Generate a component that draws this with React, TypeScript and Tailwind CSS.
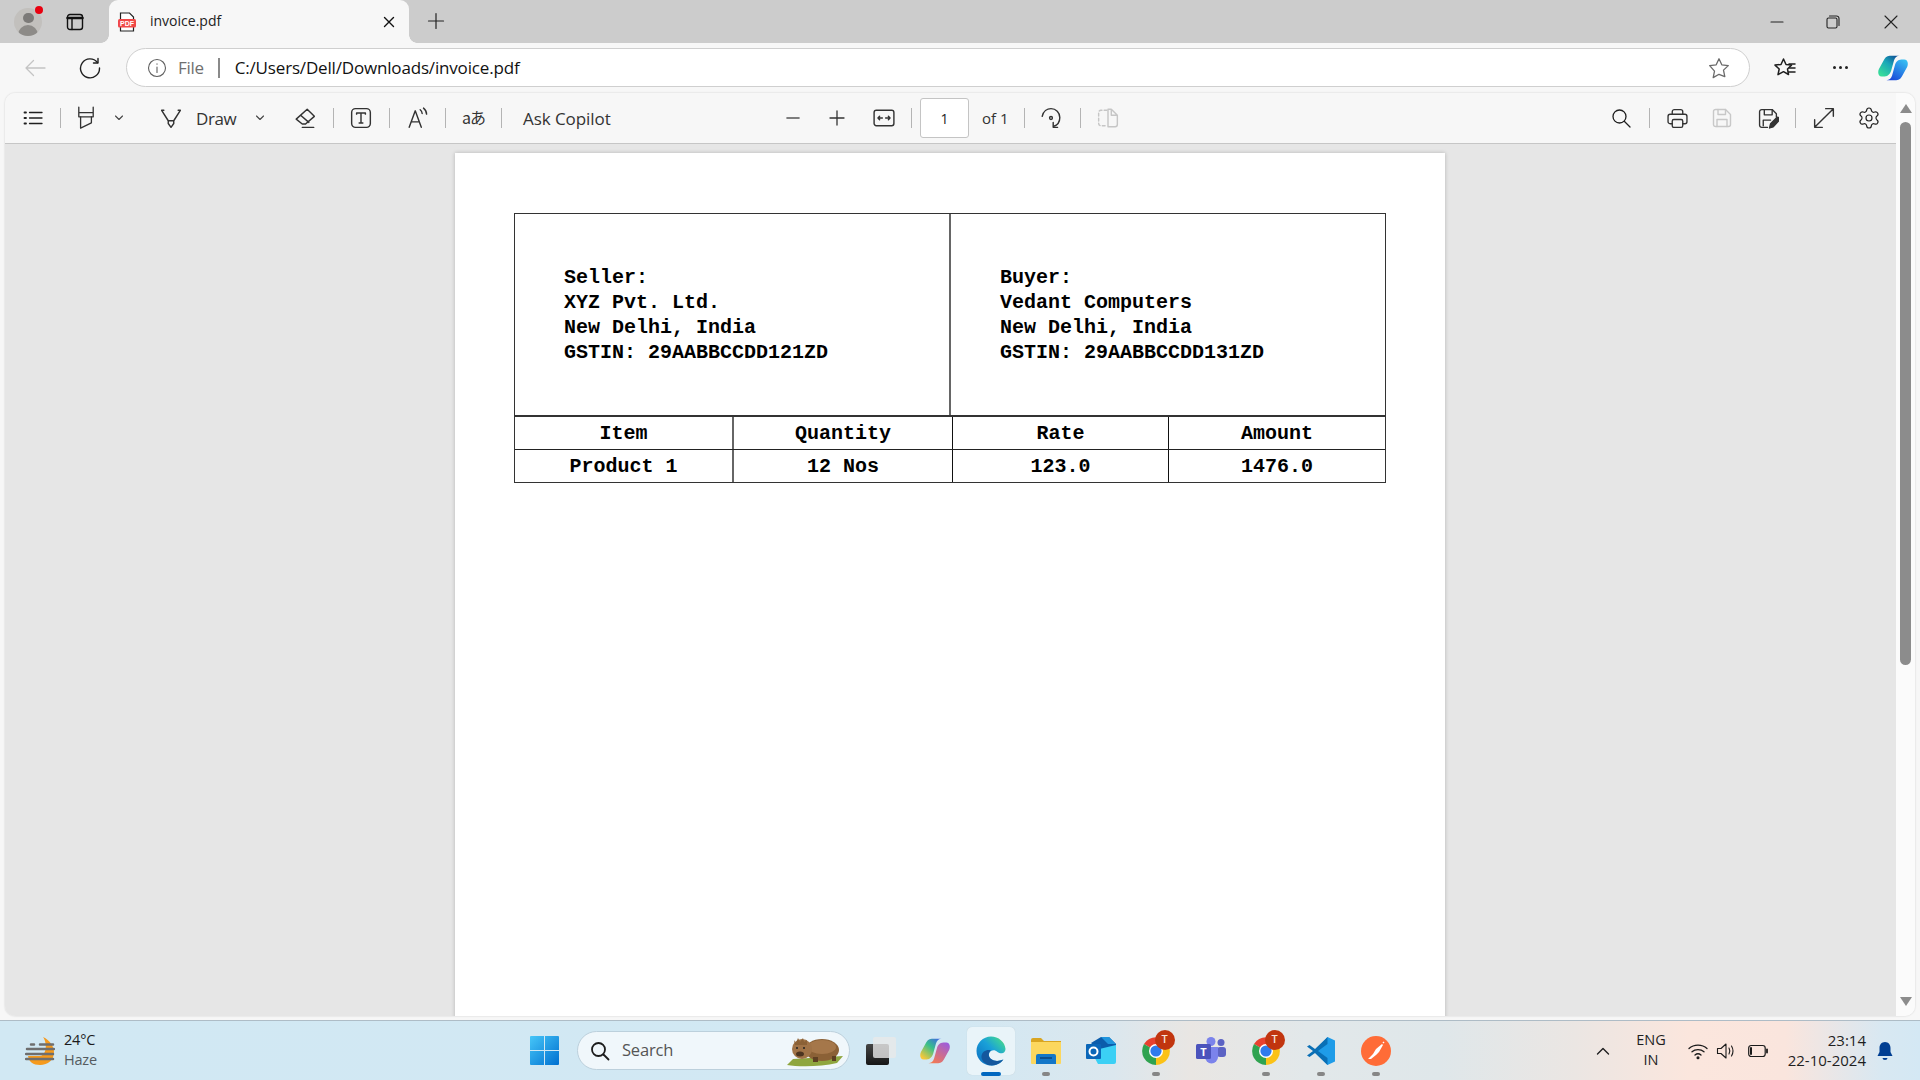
import React from "react";
import { Settings } from "lucide-react";

type P = { className?: string; children?: React.ReactNode };

const Ico = ({ className = "", children, c = "#1f1f1f", w = 1.3, vb = "0 0 20 20", s = 20 }: P & { c?: string; w?: number; vb?: string; s?: number }) => (
  <svg width={s} height={s} viewBox={vb} fill="none" stroke={c} strokeWidth={w} strokeLinecap="round" strokeLinejoin="round" className={`shrink-0 ${className}`}>
    {children}
  </svg>
);

const Sep = ({ className = "" }: P) => <span className={`w-px h-[20px] bg-[#b4b4b4] shrink-0 ${className}`} />;

const Chev = ({ className = "" }: P) => (
  <Ico s={12} vb="0 0 12 12" c="#444" w={1.1} className={className}>
    <path d="M2.500 4 6 7.500 9.500 4" />
  </Ico>
);

const CopilotShape = ({ id, a, b, c, d, e }: { id: string; a: string; b: string; c: string; d: string; e: string }) => (
  <>
    <defs>
      <linearGradient id={`${id}1`} x1="0.85" y1="0" x2="0.1" y2="0.9">
        <stop offset="0" stopColor={a} />
        <stop offset="0.45" stopColor={e} />
        <stop offset="1" stopColor={b} />
      </linearGradient>
      <linearGradient id={`${id}2`} x1="0.9" y1="0" x2="0.2" y2="1">
        <stop offset="0" stopColor={c} />
        <stop offset="1" stopColor={d} />
      </linearGradient>
    </defs>
    <path d="M14 1h9c-3 0-5 2-6 5l-3 11c-1 3-3 6-7 6H4C0 23-.5 18 1 15L6 6c2-4 4-5 8-5z" fill={`url(#${id}1)`} />
    <path d="M18 27H9c3 0 5-2 6-5l3-11c1-3 3-6 7-6h3c4 0 4.500 5 3 8l-5 9c-2 4-4 5-8 5z" fill={`url(#${id}2)`} />
  </>
);

const Chrome = () => (
  <div className="relative w-[30px] h-[30px]">
    <svg width="30" height="30" viewBox="0 0 30 30">
      <path d="M15 15 3 8A14 14 0 0 1 27 8z" fill="#e8412f" />
      <path d="M15 15 3 8A14 14 0 0 0 15 29z" fill="#2fa350" />
      <path d="M15 15 27 8A14 14 0 0 1 15 29z" fill="#fbc217" />
      <circle cx="15" cy="15" r="7" fill="#fff" />
      <circle cx="15" cy="15" r="5.600" fill="#2f7bec" />
    </svg>
    <div className="absolute left-[14px] -top-[6px] w-[20px] h-[20px] rounded-full bg-[#c1350f] flex items-center justify-center text-[11px] font-semibold text-[#f6e3da] font-['Open_Sans',sans-serif]">T</div>
  </div>
);

const Dock = ({ children, active, dot }: P & { active?: boolean; dot?: boolean }) => (
  <div className="relative w-[55px] h-[60px] flex items-center justify-center shrink-0">
    {active && <div className="absolute left-[3.500px] top-[6px] w-[48px] h-[48px] rounded-[5px] bg-[#e9f4f9] shadow-[0_0_1px_rgba(0,0,0,0.15)]" />}
    <div className="relative">{children}</div>
    {active && <div className="absolute left-[17.500px] bottom-[5px] w-[20px] h-[4px] rounded-full bg-[#0067c0]" />}
    {dot && <div className="absolute left-[23.500px] bottom-[5px] w-[8px] h-[4px] rounded-full bg-[#868686]" />}
  </div>
);

const tableFont = "font-['Liberation_Mono',monospace] font-bold text-[20px] leading-[25px] text-black";

const Party = ({ lines, className = "" }: P & { lines: string[] }) => (
  <div className={`pl-[49px] pt-[51px] ${className}`}>
    {lines.map((l) => (
      <div key={l} className="whitespace-pre">{l}</div>
    ))}
  </div>
);

export default function App() {
  return (
    <div className="w-[1920px] h-[1080px] overflow-hidden flex flex-col bg-[#f7f7f7] font-['Open_Sans',sans-serif] text-[#1f1f1f]">
      {/* Tab strip */}
      <div className="h-[43px] bg-[#cccccc] flex items-center shrink-0">
        <div className="relative ml-[14px] w-[28px] h-[28px] rounded-full bg-[#c2c0bd] overflow-hidden shrink-0 flex flex-col items-center">
          <div className="mt-[5px] w-[11px] h-[11px] rounded-full bg-[#7c7a78]" />
          <div className="mt-[2px] w-[20px] h-[12px] rounded-t-full bg-[#8d8b88]" />
        </div>
        <div className="ml-[-7px] mt-[-24px] w-[8px] h-[8px] rounded-full bg-[#e8000f] shrink-0 z-10" />
        <Ico s={18} vb="0 0 18 18" c="#111" w={1.4} className="ml-[23px]">
          <rect x="1.500" y="1.500" width="15" height="15" rx="2.500" />
          <path d="M1.500 5h15" strokeWidth="2.500" />
          <path d="M6 5v11.500" />
        </Ico>
        <div className="relative self-end ml-[25px] w-[300px] h-[43px] bg-[#f7f7f7] rounded-t-[9px] flex items-center shrink-0">
          <span className="absolute -left-[8px] bottom-0 w-[8px] h-[8px] bg-[radial-gradient(circle_at_0_0,#cccccc_7.500px,#f7f7f7_8px)]" />
          <span className="absolute -right-[8px] bottom-0 w-[8px] h-[8px] bg-[radial-gradient(circle_at_100%_0,#cccccc_7.500px,#f7f7f7_8px)]" />
          <svg width="18" height="20" viewBox="0 0 18 20" className="ml-[9px] shrink-0">
            <path d="M2.500 1h9l4 4v14h-13z" fill="#fff" stroke="#222" strokeWidth="1.200" />
            <rect x="0" y="7" width="18" height="8.500" rx="1.500" fill="#f04848" />
            <text x="9" y="13.800" textAnchor="middle" fontSize="7" fontWeight="700" fill="#fff" fontFamily="Liberation Sans">PDF</text>
          </svg>
          <span className="ml-[14px] -mt-[2px] text-[14px] leading-none text-[#222]">invoice.pdf</span>
          <Ico s={14} vb="0 0 14 14" c="#111" w={1.4} className="ml-auto mr-[13px]">
            <path d="M2.500 2.500l9 9M11.500 2.500l-9 9" />
          </Ico>
        </div>
        <Ico s={18} vb="0 0 18 18" c="#222" w={1.2} className="ml-[18px] -mt-[2px]">
          <path d="M9 1.500v15M1.500 9h15" />
        </Ico>
        <Ico s={14} vb="0 0 14 14" c="#222" w={1.1} className="ml-auto">
          <path d="M1 7h12" />
        </Ico>
        <Ico s={14} vb="0 0 14 14" c="#222" w={1.1} className="ml-[42px]">
          <rect x="1" y="3" width="10" height="10" rx="1.500" />
          <path d="M3.500 1h7a2.500 2.500 0 0 1 2.500 2.500v7" />
        </Ico>
        <Ico s={14} vb="0 0 14 14" c="#222" w={1.1} className="ml-[44px] mr-[22px]">
          <path d="M1 1l12 12M13 1 1 13" />
        </Ico>
      </div>

      {/* Address row */}
      <div className="h-[50px] flex items-center shrink-0 pb-[1px]">
        <Ico s={24} vb="0 0 24 24" c="#c4c4c4" w={1.3} className="ml-[23px]">
          <path d="M22 12H3M10.500 4.500 3 12l7.500 7.500" />
        </Ico>
        <Ico s={22} vb="0 0 22 22" c="#1f1f1f" w={1.4} className="ml-[32px]">
          <path d="M18.500 5.500A9.500 9.500 0 1 0 20.500 11" />
          <path d="M19 1.500v4.500h-4.500" />
        </Ico>
        <div className="ml-[25px] w-[1624px] h-[39px] rounded-full bg-white border border-[#cfcfcf] flex items-center shrink-0">
          <Ico s={20} vb="0 0 20 20" c="#5f5f5f" w={1.1} className="ml-[20px]">
            <circle cx="10" cy="10" r="8.500" />
            <path d="M10 9v5.500M10 5.800v.4" />
          </Ico>
          <span className="ml-[11px] text-[17px] tracking-[-0.3px] text-[#6f6f6f] leading-none">File</span>
          <span className="ml-[14px] w-[2px] h-[20px] bg-[#8a8a8a]" />
          <span className="ml-[15px] text-[17px] tracking-[-0.17px] text-[#111] leading-none">C:/Users/Dell/Downloads/invoice.pdf</span>
          <Ico s={22} vb="0 0 22 22" c="#6a6a6a" w={1.3} className="ml-auto mr-[19px]">
            <path d="m11 1.800 2.800 6 6.500.8-4.800 4.500 1.300 6.500L11 17.300l-5.800 3.300 1.300-6.500L1.700 8.600l6.500-.8z" />
          </Ico>
        </div>
        <Ico s={22} vb="0 0 22 22" c="#1f1f1f" w={1.5} className="ml-[24px]">
          <path d="M9.500 2 12 7.500l5.500.6-4 3.900 1 5.500-5-2.800-5.500 3 1.200-5.700L1 8.100l6-.6z" />
          <path d="M15 7h6M15.500 11H21M14.500 15H21" />
        </Ico>
        <div className="ml-[33px] w-[22px] flex justify-center gap-[3px] shrink-0">
          <span className="w-[3px] h-[3px] rounded-full bg-[#222]" />
          <span className="w-[3px] h-[3px] rounded-full bg-[#222]" />
          <span className="w-[3px] h-[3px] rounded-full bg-[#222]" />
        </div>
        <svg width="31" height="28" viewBox="0 0 33 28" className="ml-[27px] shrink-0">
          <CopilotShape id="cp" a="#0f4f96" e="#1aa6b8" b="#37dc9a" c="#37c3f3" d="#1a45d8" />
        </svg>
      </div>

      {/* PDF viewer */}
      <div className="flex-1 min-h-0 ml-[5px] mr-[5px] mb-[4px] flex rounded-t-[10px] rounded-b-[10px] overflow-hidden shadow-[0_0_2px_rgba(0,0,0,0.18)]">
        <div className="flex-1 min-w-0 flex flex-col">
          <div className="h-[51px] shrink-0 bg-[#f7f7f7] border-b border-[#c6c6c6] flex items-center">
            <Ico className="ml-[18px]">
              <path d="M6.500 4.500H19M6.500 10H19M6.500 15.500H19" />
              <path d="M1.500 4.500h1.500M1.500 10h1.500M1.500 15.500h1.500" strokeWidth="1.800" />
            </Ico>
            <Sep className="ml-[17px]" />
            <Ico s={24} className="ml-[13px]" c="#333" w={1.1}>
              <path d="M4 1v8h12V1M4 5.500h12" />
              <path d="M5.500 9v9.500l9-4.500V9" />
            </Ico>
            <Chev className="ml-[15px]" />
            <Ico s={22} className="ml-[35px]" c="#333">
              <path d="M1.500 3 7.500 12.500v2.500l2.500 3.500 2.500-3.500v-2.500L18.500 3M1.500 3h2M16.500 3h2M7.500 12.500h5" />
            </Ico>
            <span className="ml-[14px] w-[39px] text-[17px] leading-none tracking-[-0.4px] text-[#333]">Draw</span>
            <Chev className="ml-[19px]" />
            <Ico s={22} className="ml-[28px]" c="#333">
              <path d="M12 2 18.500 8.500 10.500 15.500H7.500L2 11zM6 7.500l7.500 6.500M7.500 18.500H18" />
            </Ico>
            <Sep className="ml-[17px]" />
            <Ico s={22} className="ml-[16px]" c="#333">
              <rect x="1.500" y="1.500" width="17" height="17" rx="3.500" />
              <path d="M6 6.500V5.500h8v1M10 5.500v9M8.300 14.500h3.400" />
            </Ico>
            <Sep className="ml-[17px]" />
            <Ico s={22} className="ml-[17px]" c="#333">
              <path d="M2 18.500 7.500 3.500l5.500 15M4 13.500h7" />
              <path d="M12 2.500c1.200 1 1.800 2.200 1.800 3.500M15 1c2 1.600 2.800 3.500 2.800 5.500" />
            </Ico>
            <Sep className="ml-[16px]" />
            <span className="ml-[16px] w-[24px] -mt-[3px] text-[16px] leading-none whitespace-nowrap tracking-[-1px] text-[#333] font-['Noto_Sans_CJK_JP',sans-serif]">aあ</span>
            <Sep className="ml-[15px]" />
            <span className="ml-[21px] w-[88px] text-[17px] leading-none whitespace-nowrap tracking-[-0.07px] text-[#333]">Ask Copilot</span>

            <Ico className="ml-[172px]" c="#555" w={1.6}>
              <path d="M4 10h12" />
            </Ico>
            <Ico className="ml-[24px]" c="#333">
              <path d="M10 3v14M3 10h14" />
            </Ico>
            <Ico s={22} className="ml-[26px]" c="#333">
              <rect x="1" y="3" width="18" height="14" rx="2" />
              <path d="M4.500 10h4M4.500 10l1.500-1.500M4.500 10l1.500 1.500M15.500 10h-4M15.500 10 14 8.500M15.500 10 14 11.500" />
            </Ico>
            <Sep className="ml-[16px]" />
            <div className="ml-[8px] w-[49px] h-[40px] rounded-[3px] bg-white border border-[#c4c4c4] flex items-center justify-center text-[14px] text-[#222] shrink-0">1</div>
            <span className="ml-[13px] w-[25px] text-[15px] leading-none whitespace-nowrap text-[#333]">of 1</span>
            <Sep className="ml-[17px]" />
            <Ico s={22} className="ml-[15px]" c="#333">
              <path d="M2 8.500C3 4 6.500 1.500 10 1.500c4.500 0 8 3.500 8 8 0 4-2.500 7-5.500 8" />
              <path d="M12 14v4.500h4" />
              <circle cx="10" cy="10" r="1.300" />
            </Ico>
            <Sep className="ml-[18px]" />
            <Ico s={22} className="ml-[16px]" c="#c6c6c6">
              <path d="M9 3H3.500a2 2 0 0 0-2 2v10a2 2 0 0 0 2 2H9" strokeDasharray="2.500 2" />
              <path d="M10 2v16h6.500a2 2 0 0 0 2-2V7.500L13 2zM13 2v5.500h5.500" />
            </Ico>

            <Ico className="ml-[492px]">
              <circle cx="8.500" cy="8.500" r="6.500" />
              <path d="M13.500 13.500l5.500 5.500" />
            </Ico>
            <Sep className="ml-[18px]" />
            <Ico s={21} className="ml-[17px]" c="#333">
              <path d="M5 6V3.500A2 2 0 0 1 7 1.500h6a2 2 0 0 1 2 2V6M5 15H3a2 2 0 0 1-2-2V8a2 2 0 0 1 2-2h14a2 2 0 0 1 2 2v5a2 2 0 0 1-2 2h-2" />
              <rect x="5" y="11" width="10" height="7.500" rx="1.500" />
            </Ico>
            <Ico className="ml-[24px]" c="#c8c8c8" w={1.4}>
              <path d="M3.500 1.500h10l5 5v10a2 2 0 0 1-2 2h-13a2 2 0 0 1-2-2v-13a2 2 0 0 1 2-2z" />
              <path d="M6 1.500v5h7.500v-5M5 18.500v-7h10v7" />
            </Ico>
            <Ico s={21} className="ml-[26px]" c="#333">
              <path d="M9 18.500H3.500a2 2 0 0 1-2-2v-13a2 2 0 0 1 2-2h10l4 4v3" />
              <path d="M6 1.500v5h7.500v-5M5 17v-5.500h7" />
              <path d="M11 19l1-4 5.500-5.500a1.600 1.600 0 0 1 2.500 2.500L14.500 18z" fill="#333" />
            </Ico>
            <Sep className="ml-[16px]" />
            <Ico s={22} className="ml-[17px]" c="#333">
              <path d="M11.500 1.500h7v7M18.500 1.500l-17 17M1.500 11.500v7h7" />
            </Ico>
            <Settings size={24} strokeWidth={1.2} color="#222" className="ml-[22px] shrink-0" />
          </div>
          <div className="flex-1 min-h-0 bg-[#e6e6e6] overflow-hidden pl-[450px] pt-[9px]">
            <div className="w-[990px] h-[1200px] bg-white shadow-[0_0_4px_rgba(0,0,0,0.22)] pl-[59px] pt-[60px]">
              <div className={`w-[872px] border border-[#333] ${tableFont}`}>
                <div className="h-[203px] flex border-b-2 border-[#333]">
                  <Party className="w-[436px] border-r-2 border-[#666]" lines={["Seller:", "XYZ Pvt. Ltd.", "New Delhi, India", "GSTIN: 29AABBCCDD121ZD"]} />
                  <Party className="flex-1" lines={["Buyer:", "Vedant Computers", "New Delhi, India", "GSTIN: 29AABBCCDD131ZD"]} />
                </div>
                <div className="h-[33px] flex items-center text-center border-b border-[#222]">
                  <div className="w-[219px] h-full flex items-center justify-center border-r-2 border-[#666]">Item</div>
                  <div className="w-[219px] h-full flex items-center justify-center border-r border-[#111]">Quantity</div>
                  <div className="w-[216px] h-full flex items-center justify-center border-r border-[#111]">Rate</div>
                  <div className="flex-1 h-full flex items-center justify-center">Amount</div>
                </div>
                <div className="h-[32px] flex items-center text-center">
                  <div className="w-[219px] h-full flex items-center justify-center border-r-2 border-[#666]">Product 1</div>
                  <div className="w-[219px] h-full flex items-center justify-center border-r border-[#111]">12 Nos</div>
                  <div className="w-[216px] h-full flex items-center justify-center border-r border-[#111]">123.0</div>
                  <div className="flex-1 h-full flex items-center justify-center">1476.0</div>
                </div>
              </div>
            </div>
          </div>
        </div>
        <div className="w-[19px] shrink-0 bg-[#fbfbfb] flex flex-col items-center">
          <div className="mt-[11px] w-0 h-0 border-l-[6.500px] border-r-[6.500px] border-b-[9px] border-l-transparent border-r-transparent border-b-[#8c8c8c]" />
          <div className="mt-[9px] w-[11px] h-[543px] rounded-full bg-[#8c8c8c]" />
          <div className="mt-auto mb-[10px] w-0 h-0 border-l-[6.500px] border-r-[6.500px] border-t-[9px] border-l-transparent border-r-transparent border-t-[#8c8c8c]" />
        </div>
      </div>

      {/* Taskbar */}
      <div className="h-[60px] shrink-0 border-t border-[#aebcc6] flex items-center bg-[linear-gradient(90deg,#d1e8f3_0%,#d2e8f3_50%,#dbe7ee_58%,#e9e6e3_62%,#e2e8ea_68%,#dfe7ea_75%,#ebe6e3_82%,#fbe6dd_88%,#fae5dd_93%,#d8e8f2_98%,#d4e8f4_100%)]">
        <div className="w-[530px] shrink-0 flex items-center pl-[25px]">
          <svg width="30" height="30" viewBox="0 0 30 30" className="shrink-0">
            <path d="M18 1c7 3 11 10 11 15 0 8-6 13-14 13C8 29 4 26 3 20h12c6 0 8-12 3-19z" fill="#f59a1d" />
            <path d="M6 8.500h3M15 8.500h13M2 13h27M1 18h27M1 23h27" stroke="#6e6e6e" strokeWidth="2.500" strokeLinecap="round" />
          </svg>
          <div className="ml-[9px] -mt-[2px] text-[14.500px] leading-[20px] tracking-[-0.2px]">
            <div className="text-[#1b1b1b]">24°C</div>
            <div className="text-[#555b60]">Haze</div>
          </div>
        </div>
        <svg width="29" height="29" viewBox="0 0 29 29" className="shrink-0">
          <defs>
            <linearGradient id="win" x1="0" y1="0" x2="1" y2="1">
              <stop offset="0" stopColor="#46c6f8" />
              <stop offset="1" stopColor="#0070d0" />
            </linearGradient>
          </defs>
          <path d="M0 1a1 1 0 0 1 1-1h13v14H0zM15 0h13a1 1 0 0 1 1 1v13H15zM0 15h14v14H1a1 1 0 0 1-1-1zM15 15h14v13a1 1 0 0 1-1 1H15z" fill="url(#win)" />
        </svg>
        <div className="ml-[18px] w-[273px] h-[39px] rounded-full bg-[#f0f7fb] border border-[#bcd0dc] flex items-center shrink-0">
          <Ico s={20} vb="0 0 20 20" c="#1c1c1c" w={1.8} className="ml-[12px]">
            <circle cx="8.500" cy="8.500" r="6.500" />
            <path d="M13.500 13.500l5 5" />
          </Ico>
          <span className="ml-[12px] text-[16.500px] leading-none tracking-[-0.2px] text-[#555]">Search</span>
          <svg width="58" height="32" viewBox="0 0 58 32" className="ml-auto mr-[5px] shrink-0">
            <path d="M1 30 7 24 57 21 51 28 C35 32 12 32 1 30z" fill="#8fa63f" />
            <ellipse cx="36" cy="15" rx="17" ry="11" fill="#8b6136" />
            <ellipse cx="36" cy="12" rx="14" ry="7" fill="#a5774a" />
            <path d="M27 22h5v5h-5zM46 21h4v5h-4z" fill="#5e3f22" />
            <ellipse cx="16" cy="14" rx="10" ry="10" fill="#a07347" />
            <path d="M8 5l2 3 2-5 2 4 3-4 1 4 3-2v5H9z" fill="#8b6136" />
            <ellipse cx="14" cy="19" rx="4" ry="2.500" fill="#4c3420" />
            <circle cx="11" cy="13" r="1" fill="#222" />
            <circle cx="18" cy="13" r="1" fill="#222" />
          </svg>
        </div>
        <div className="ml-[16px] flex items-end w-[30px] h-[28px] shrink-0">
          <div className="w-[23px] h-[21px] rounded-[2px] bg-[linear-gradient(180deg,#454545,#161616)]" />
          <div className="ml-[-16px] mb-[7px] w-[23px] h-[21px] rounded-[2px] bg-[#e8e8e8]/80" />
        </div>
        <div className="ml-[12px] flex shrink-0">
          <Dock>
            <svg width="31" height="28" viewBox="0 0 33 28">
              <CopilotShape id="cq" a="#3f6be0" e="#38c08a" b="#f6c83a" c="#9a5ce0" d="#f47a50" />
            </svg>
          </Dock>
          <Dock active>
            <svg width="30" height="30" viewBox="0 0 30 30">
              <defs>
                <linearGradient id="ed1" x1="0" y1="1" x2="1" y2="0">
                  <stop offset="0" stopColor="#0a6cc0" />
                  <stop offset="0.55" stopColor="#1aa0d8" />
                  <stop offset="0.8" stopColor="#35c8a8" />
                  <stop offset="1" stopColor="#72d858" />
                </linearGradient>
              </defs>
              <path d="M29.500 13C29 6 22.500.500 15 .500 7 .500.500 7 .500 15c0 8 6.500 14.500 14.500 14.500 5 0 9.500-2 12-6-4 2-9 2-12-.5-2.500-2-3-6 0-8 2-1.500 4.500-1 6.500 1 3 2 8 2 8-3.500z" fill="url(#ed1)" />
              <path d="M27.500 23.500c-4 2-9.500 2-12.500-.5-3-2.500-3-6.500 0-8.500-4-1.500-9 1-9.500 5.500-.5 4 3 8 8 9.300 6 .7 11-1.800 14-5.800z" fill="#14589e" />
            </svg>
          </Dock>
          <Dock dot>
            <svg width="30" height="27" viewBox="0 0 30 27">
              <path d="M0 3a2 2 0 0 1 2-2h8l3 3h17v5H0z" fill="#d9a521" />
              <path d="M0 5h30v21a1 1 0 0 1-1 1H1a1 1 0 0 1-1-1z" fill="#fcd75e" />
              <path d="M5 27v-8a2 2 0 0 1 2-2h16a2 2 0 0 1 2 2v8z" fill="#1477c8" />
              <path d="M9 21h12" stroke="#0d4f8e" strokeWidth="2" />
            </svg>
          </Dock>
          <Dock>
            <svg width="30" height="27" viewBox="0 0 30 27">
              <path d="M5 6 15 0l8 0 7 7v5L15 16z" fill="#0b5cab" />
              <path d="M15 0h8l7 7h-8z" fill="#2095dd" />
              <path d="M5 14 30 8v17a2 2 0 0 1-2 2H12z" fill="#3bd0f5" />
              <rect x="0" y="7" width="15" height="15" rx="1" fill="#0a66b8" />
              <circle cx="7.500" cy="14.500" r="4" fill="none" stroke="#fff" strokeWidth="2" />
            </svg>
          </Dock>
          <Dock dot><Chrome /></Dock>
          <Dock>
            <svg width="30" height="27" viewBox="0 0 30 27">
              <circle cx="25" cy="5.500" r="3.500" fill="#5c63c4" />
              <circle cx="15" cy="4.500" r="4.500" fill="#7b83eb" />
              <rect x="21" y="10" width="9" height="10" rx="3" fill="#5c63c4" />
              <path d="M9 10h13v10a6.500 6.500 0 0 1-13 0z" fill="#7b83eb" />
              <rect x="0" y="7" width="15" height="15" rx="1.500" fill="#4b53bc" />
              <text x="7.500" y="18.500" textAnchor="middle" fontSize="11" fontWeight="700" fill="#fff" fontFamily="Open Sans">T</text>
            </svg>
          </Dock>
          <Dock dot><Chrome /></Dock>
          <Dock dot>
            <svg width="30" height="30" viewBox="0 0 30 30">
              <path d="M21.500 1 29 4.500v21L21.500 29 9 16.500z" fill="#1f9ce8" />
              <path d="M21.500 1 9 13 3.500 9 1 10.500 7 15l-6 4.500L3.500 21 9 17l12.500 12V22L12 15l9.500-7z" fill="#0a6fb5" />
            </svg>
          </Dock>
          <Dock dot>
            <svg width="30" height="30" viewBox="0 0 30 30">
              <circle cx="15" cy="15" r="15" fill="#ff6c37" />
              <path d="M7 23l5-5 3-5 6-5 1 1-4 7-3 3-5 4z" fill="#fff" />
              <path d="M22 6l1 1" stroke="#fff" strokeWidth="1.500" />
            </svg>
          </Dock>
        </div>
        <Ico s={14} vb="0 0 14 14" c="#1f1f1f" w={1.4} className="ml-[193px]">
          <path d="M1.500 10 7 4.500 12.500 10" />
        </Ico>
        <div className="ml-[21px] -mt-[2px] w-[40px] text-center text-[14.500px] leading-[20px] text-[#1f1f1f] shrink-0">
          <div>ENG</div>
          <div>IN</div>
        </div>
        <Ico className="ml-[17px]" c="#1a1a1a" w={1.3}>
          <path d="M1 7.500C5.800 3 14.200 3 19 7.500M4 10.800c3.300-3 8.700-3 12 0M7 14c1.700-1.400 4.300-1.400 6 0" />
          <circle cx="10" cy="16.800" r=".9" fill="#1a1a1a" />
        </Ico>
        <Ico className="ml-[8px]" c="#1a1a1a" w={1.1}>
          <path d="M1.500 7.500h3.500L10 3v14l-5-4.500H1.500z" />
          <path d="M13 7c1 1.800 1 4.200 0 6M15.500 5c1.800 3 1.800 7 0 10" />
        </Ico>
        <Ico className="ml-[12px]" c="#1a1a1a" w={1.2}>
          <rect x="0.700" y="4.500" width="16.500" height="11" rx="2.500" />
          <path d="M3 7v6" strokeWidth="2" />
          <path d="M19 8.500v3" strokeWidth="1.800" />
        </Ico>
        <div className="ml-[8px] -mt-[2px] w-[90px] text-right text-[15px] leading-[20px] text-[#1f1f1f] shrink-0">
          <div>23:14</div>
          <div className="whitespace-nowrap">22-10-2024</div>
        </div>
        <svg width="20" height="20" viewBox="0 0 20 20" className="ml-[9px] shrink-0">
          <path d="M10 1c-3.500 0-5.500 2.800-5.500 6v4L2.500 15h15l-2-4V7c0-3.200-2-6-5.500-6z" fill="#003e92" />
          <path d="M7.500 17a2.500 2 0 0 0 5 0z" fill="#003e92" />
        </svg>
      </div>
    </div>
  );
}
